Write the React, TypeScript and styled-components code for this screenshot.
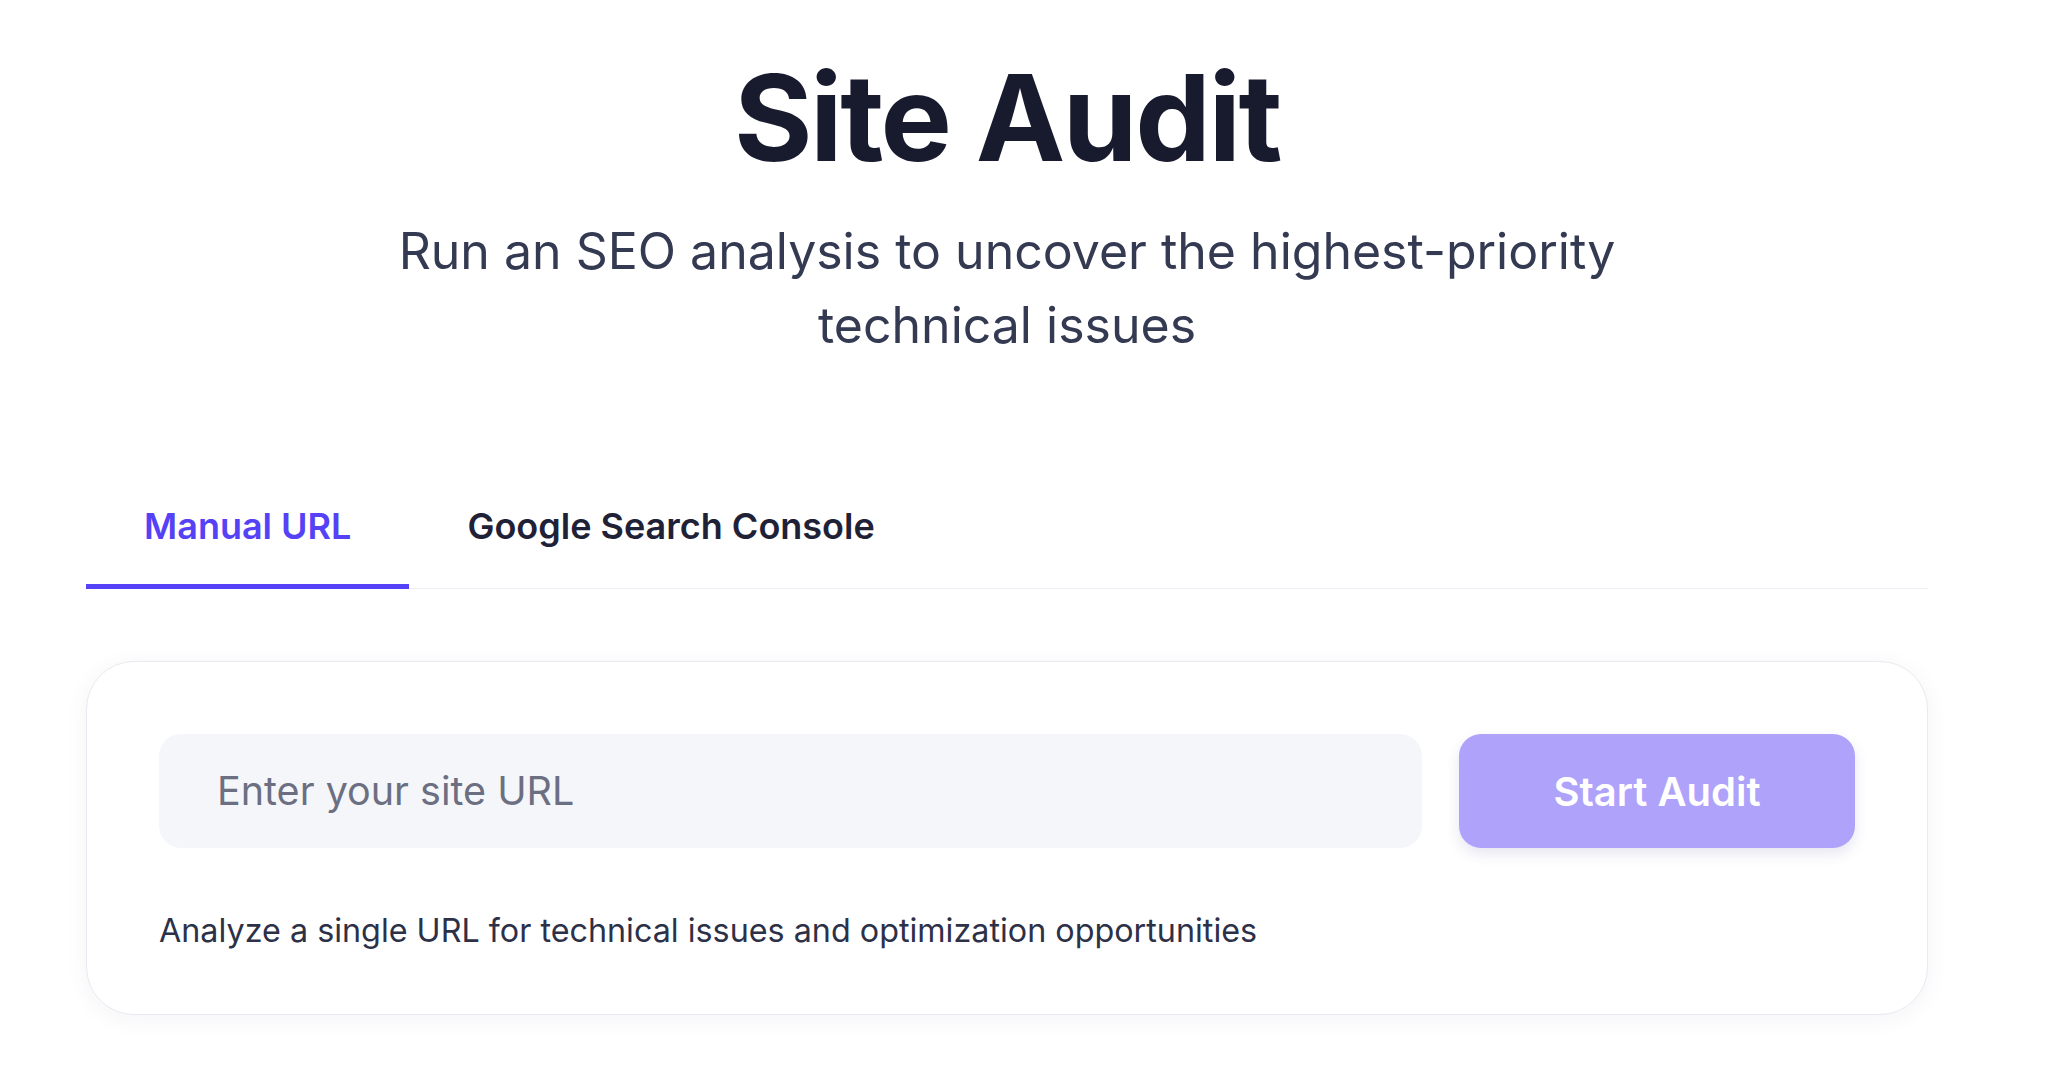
import React, { useState } from 'react';
import styled, { createGlobalStyle, css } from 'styled-components';

const GlobalStyle = createGlobalStyle`
  html, body {
    margin: 0;
    padding: 0;
    background: #ffffff;
  }
  body {
    font-family: Inter, "Noto Sans", "Liberation Sans", sans-serif;
    -webkit-font-smoothing: antialiased;
  }
  * {
    box-sizing: border-box;
  }
`;

type TabKey = 'manual' | 'gsc';

const App: React.FC = () => {
  const [tab, setTab] = useState<TabKey>('manual');
  const [url, setUrl] = useState('');

  return (
    <>
      <GlobalStyle />
      <Page>
        <Header>
          <Title>Site Audit</Title>
          <Subtitle>
            Run an SEO analysis to uncover the highest-priority
            <br />
            technical issues
          </Subtitle>
        </Header>

        <Tabs>
          <Tab active={tab === 'manual'} onClick={() => setTab('manual')}>
            Manual URL
          </Tab>
          <Tab active={tab === 'gsc'} onClick={() => setTab('gsc')}>
            Google Search Console
          </Tab>
        </Tabs>

        <Card>
          <FormRow>
            <UrlInput
              placeholder="Enter your site URL"
              value={url}
              onChange={(e) => setUrl(e.target.value)}
            />
            <StartButton disabled={url.trim() === ''}>Start Audit</StartButton>
          </FormRow>
          <Hint>Analyze a single URL for technical issues and optimization opportunities</Hint>
        </Card>
      </Page>
    </>
  );
};

export default App;

const Page = styled.div`
  padding: 46px 120px 60px 86px;
`;

const Header = styled.header`
  display: flex;
  flex-direction: column;
  align-items: center;
  text-align: center;
`;

const Title = styled.h1`
  margin: 0;
  font-size: 120px;
  line-height: 1.2;
  font-weight: 700;
  letter-spacing: -0.02em;
  color: #181a2e;
`;

const Subtitle = styled.p`
  margin: 24px 0 0;
  font-size: 50px;
  line-height: 74px;
  font-weight: 400;
  color: #343a52;
`;

const Tabs = styled.nav`
  display: flex;
  margin-top: 142px;
  border-bottom: 1px solid #eeeef4;
`;

const Tab = styled.button<{ active: boolean }>`
  border: none;
  background: none;
  padding: 0 58px 36px;
  margin-bottom: -1px;
  font-family: inherit;
  font-size: 36px;
  font-weight: 600;
  line-height: 44px;
  color: #1f2237;
  border-bottom: 5px solid transparent;
  cursor: pointer;

  ${(props) =>
    props.active &&
    css`
      color: #5541f6;
      border-bottom-color: #5541f6;
    `}
`;

const Card = styled.section`
  margin-top: 72px;
  padding: 72px 72px 61px;
  border: 1px solid #e9e9f1;
  border-radius: 48px;
  background: #ffffff;
  box-shadow: 0 4px 24px rgba(40, 40, 90, 0.05);
`;

const FormRow = styled.div`
  display: flex;
  gap: 37px;
`;

const UrlInput = styled.input`
  flex: 1;
  height: 114px;
  padding: 0 58px;
  border: none;
  border-radius: 22px;
  background: #f5f6fa;
  font-family: inherit;
  font-size: 39.5px;
  color: #1f2237;
  outline: none;

  &::placeholder {
    color: #6c6f82;
  }
`;

const StartButton = styled.button`
  flex: none;
  width: 396px;
  height: 114px;
  border: none;
  border-radius: 22px;
  background: #5b47f5;
  font-family: inherit;
  font-size: 40px;
  font-weight: 600;
  color: #ffffff;
  cursor: pointer;
  box-shadow: 0 6px 14px rgba(60, 50, 140, 0.12);

  &:disabled {
    background: #aea2fb;
    cursor: not-allowed;
  }
`;

const Hint = styled.p`
  margin: 61px 0 0;
  font-size: 32.3px;
  line-height: 44px;
  color: #2d3148;
`;
